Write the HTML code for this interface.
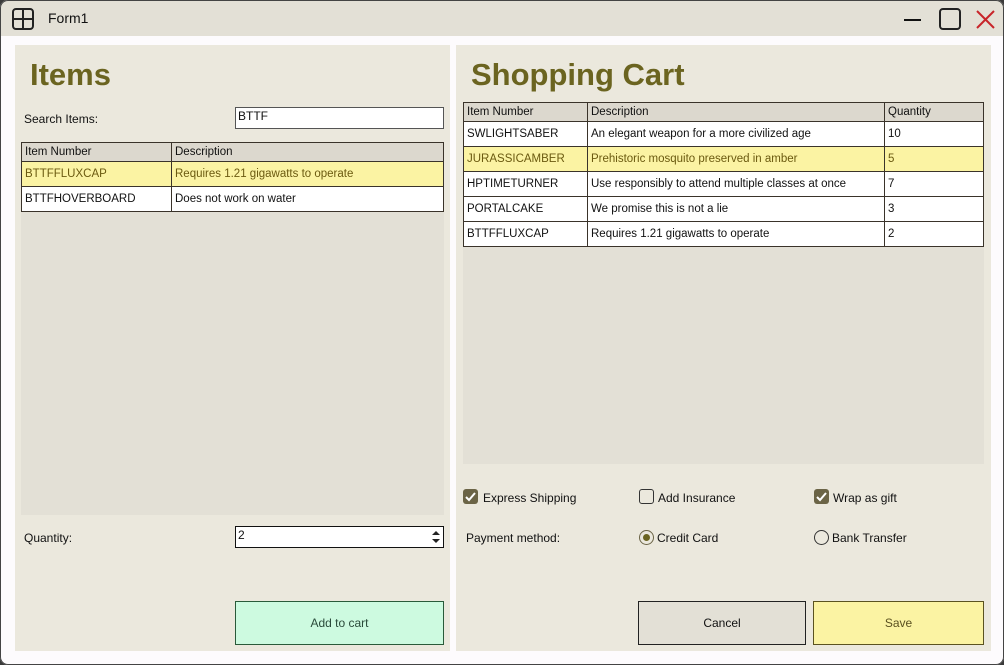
<!DOCTYPE html>
<html><head><meta charset="utf-8"><style>
*{box-sizing:border-box;margin:0;padding:0}
body{width:1004px;height:665px;background:#3a3a3a;font-family:"Liberation Sans",sans-serif;font-size:12px;color:#111;position:relative;overflow:hidden}
.win{position:absolute;left:0;top:0;width:1004px;height:665px;background:#fdfbfd;border-radius:8px;overflow:hidden}
.frame{position:absolute;left:0;top:0;width:1004px;height:665px;border:1px solid #444;border-radius:8px;pointer-events:none}
.tb{position:absolute;left:0;top:0;width:1004px;height:36px;background:#e3e0d6}
.c{position:absolute;left:1px;top:1px;width:1003px;height:664px}
.a{position:absolute}
.panel{position:absolute;background:#ebe8dd}
h1{position:absolute;font-size:31px;font-weight:bold;color:#6b6420;letter-spacing:0px}
.inp{position:absolute;background:#fff;border:1px solid #555;padding:1px 2px;font-size:12px}
.grid{position:absolute;background:#e3e0d6}
table{border-collapse:collapse;position:absolute;left:0;top:0;width:100%}
td{border:1px solid #3a332a;height:25px;padding:0 3px;font-size:11.5px;white-space:nowrap}
tr.h td{height:19px;background:#dcd8ce}
tr.r td{background:#fff}
tr.s td{background:#fbf3a3;color:#6b5a10}
.btn{position:absolute;display:flex;align-items:center;justify-content:center;font-size:12px}
.cb{position:absolute;width:15px;height:15px;border-radius:3px}
.rd{position:absolute;width:15px;height:15px;border-radius:50%;border:1.5px solid #333}
</style></head><body>
<div class="win">
<div class="tb">
<svg class="a" style="left:12px;top:8px" width="22" height="22" viewBox="0 0 22 22"><rect x="1" y="1" width="20" height="20" rx="3" fill="none" stroke="#222" stroke-width="2"/><path d="M11 1V21M1 11H21" stroke="#222" stroke-width="2"/></svg>
<div class="a" style="left:48px;top:10px;font-size:14px">Form1</div>
<svg class="a" style="left:900px;top:8px" width="100" height="22" viewBox="0 0 100 22"><path d="M4 12H21" stroke="#111" stroke-width="2"/><rect x="40" y="1" width="20" height="20" rx="3" fill="none" stroke="#222" stroke-width="2"/><path d="M77 3L94 20M94 3L77 20" stroke="#c8242a" stroke-width="2"/></svg>
</div>
<div class="c">
<div class="panel" style="left:14px;top:44px;width:435px;height:606px"></div>
<div class="panel" style="left:455px;top:44px;width:535px;height:606px"></div>
<h1 style="left:29px;top:56px">Items</h1>
<div class="a" style="left:23px;top:111px">Search Items:</div>
<div class="inp" style="left:234px;top:106px;width:209px;height:22px">BTTF</div>
<div class="grid" style="left:20px;top:141px;width:423px;height:373px">
<table><colgroup><col style="width:150px"><col></colgroup>
<tr class="h"><td>Item Number</td><td>Description</td></tr>
<tr class="s"><td>BTTFFLUXCAP</td><td>Requires 1.21 gigawatts to operate</td></tr>
<tr class="r"><td>BTTFHOVERBOARD</td><td>Does not work on water</td></tr>
</table></div>
<div class="a" style="left:23px;top:530px">Quantity:</div>
<div class="inp" style="left:234px;top:525px;width:209px;height:22px;border-color:#111">2
<svg class="a" style="right:3px;top:3px" width="8" height="14" viewBox="0 0 8 14"><path d="M0 5L4 1L8 5ZM0 9L4 13L8 9Z" fill="#222"/></svg></div>
<div class="btn" style="left:234px;top:600px;width:209px;height:44px;background:#cdfae0;border:1px solid #2a5a3a;color:#2a4a3a">Add to cart</div>

<h1 style="left:470px;top:56px">Shopping Cart</h1>
<div class="grid" style="left:462px;top:101px;width:521px;height:362px">
<table><colgroup><col style="width:124px"><col style="width:297px"><col></colgroup>
<tr class="h"><td>Item Number</td><td>Description</td><td>Quantity</td></tr>
<tr class="r"><td>SWLIGHTSABER</td><td>An elegant weapon for a more civilized age</td><td>10</td></tr>
<tr class="s"><td>JURASSICAMBER</td><td>Prehistoric mosquito preserved in amber</td><td>5</td></tr>
<tr class="r"><td>HPTIMETURNER</td><td>Use responsibly to attend multiple classes at once</td><td>7</td></tr>
<tr class="r"><td>PORTALCAKE</td><td>We promise this is not a lie</td><td>3</td></tr>
<tr class="r"><td>BTTFFLUXCAP</td><td>Requires 1.21 gigawatts to operate</td><td>2</td></tr>
</table></div>
<svg class="cb" style="left:462px;top:488px;background:#6b6446" viewBox="0 0 15 15"><path d="M3 8L6 11L12 4" fill="none" stroke="#fff" stroke-width="2"/></svg>
<div class="a" style="left:482px;top:490px">Express Shipping</div>
<div class="cb" style="left:638px;top:488px;border:1.5px solid #333"></div>
<div class="a" style="left:657px;top:490px">Add Insurance</div>
<svg class="cb" style="left:813px;top:488px;background:#6b6446" viewBox="0 0 15 15"><path d="M3 8L6 11L12 4" fill="none" stroke="#fff" stroke-width="2"/></svg>
<div class="a" style="left:832px;top:490px">Wrap as gift</div>
<div class="a" style="left:465px;top:530px">Payment method:</div>
<div class="rd" style="left:638px;top:529px;border-color:#6b6446"><div class="a" style="left:2.5px;top:2.5px;width:7px;height:7px;border-radius:50%;background:#6b6420"></div></div>
<div class="a" style="left:656px;top:530px">Credit Card</div>
<div class="rd" style="left:813px;top:529px"></div>
<div class="a" style="left:831px;top:530px">Bank Transfer</div>
<div class="btn" style="left:637px;top:600px;width:168px;height:44px;background:#e3e0d6;border:1px solid #222">Cancel</div>
<div class="btn" style="left:812px;top:600px;width:171px;height:44px;background:#fbf3a3;border:1px solid #5a5220;color:#5a5020">Save</div>
</div>
</div>
<div class="frame"></div>
</body></html>
